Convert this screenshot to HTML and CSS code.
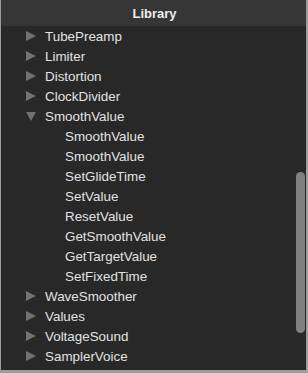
FILE: index.html
```html
<!DOCTYPE html>
<html lang="en">

<head>
    <meta charset="UTF-8">
    <meta name="viewport" content="width=device-width, initial-scale=1.0">
    <title>Library</title>
    <link rel="stylesheet" href="styles.css">
</head>

<body>
    <div class="panel">
        <div class="header">Library</div>
        <div class="list">
            <div class="row"><span class="arrow"></span>TubePreamp</div>
            <div class="row"><span class="arrow"></span>Limiter</div>
            <div class="row"><span class="arrow"></span>Distortion</div>
            <div class="row"><span class="arrow"></span>ClockDivider</div>
            <div class="row"><span class="arrow open"></span>SmoothValue</div>
            <div class="row child">SmoothValue</div>
            <div class="row child">SmoothValue</div>
            <div class="row child">SetGlideTime</div>
            <div class="row child">SetValue</div>
            <div class="row child">ResetValue</div>
            <div class="row child">GetSmoothValue</div>
            <div class="row child">GetTargetValue</div>
            <div class="row child">SetFixedTime</div>
            <div class="row"><span class="arrow"></span>WaveSmoother</div>
            <div class="row"><span class="arrow"></span>Values</div>
            <div class="row"><span class="arrow"></span>VoltageSound</div>
            <div class="row"><span class="arrow"></span>SamplerVoice</div>
            <div class="scrollbar"></div>
        </div>
    </div>
</body>

</html>
```

FILE: styles.css
```css
html,
body {
    margin: 0;
    background-color: #9c9c9c;
}

.panel {
    width: 308px;
    height: 373px;
    box-sizing: border-box;
    border-left: 1px solid #9c9c9c;
    border-right: 2px solid #9c9c9c;
    border-bottom: 3px solid #9c9c9c;
    background-color: #282828;
    font-family: "Liberation Sans", Arial, sans-serif;
    font-size: 13.4px;
    color: #e2e2e2;
    display: flex;
    flex-direction: column;
    overflow: hidden;
}

.header {
    height: 26px;
    flex-shrink: 0;
    background-color: #363636;
    display: flex;
    justify-content: center;
    align-items: center;
    font-size: 13px;
    font-weight: bold;
    color: #ececec;
    padding-left: 2px;
}

.list {
    position: relative;
    flex: 1;
}

.row {
    height: 20px;
    display: flex;
    align-items: center;
    padding-left: 25px;
}

.row.child {
    padding-left: 64px;
}

.arrow {
    width: 0;
    height: 0;
    border-top: 5px solid transparent;
    border-bottom: 5px solid transparent;
    border-left: 10px solid #717171;
    margin-right: 9px;
}

.arrow.open {
    border-left: 5px solid transparent;
    border-right: 5px solid transparent;
    border-top: 9px solid #717171;
    border-bottom: 0;
    margin-right: 9px;
}

/* overlay scrollbar */
.scrollbar {
    position: absolute;
    right: 1px;
    top: 146px;
    width: 9px;
    height: 161px;
    border-radius: 5px;
    background-color: #808080;
}
```
